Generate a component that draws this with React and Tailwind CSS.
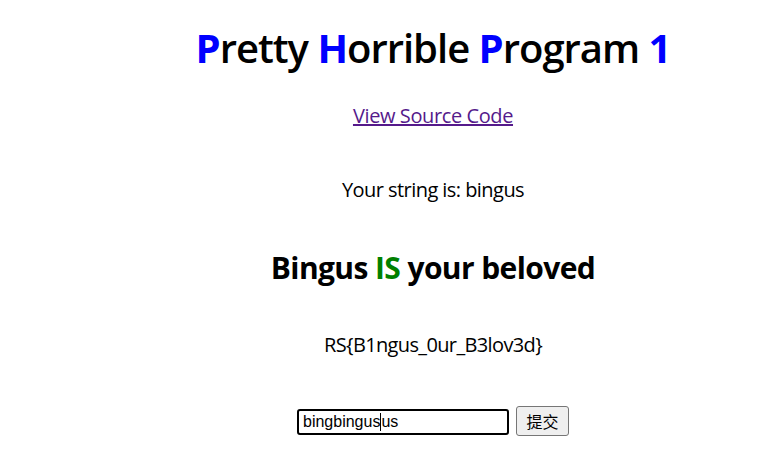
const App = () => {
  return (
    <div className="min-h-[476px] bg-white text-black pl-[94px] text-center" style={{ fontFamily: '"Open Sans", "Noto Sans", sans-serif' }}>
      <h1 className="text-[40px] leading-[48px] pt-[24px] font-semibold tracking-[-1px]">
        <span className="text-[#0000ff] font-bold">P</span>retty{' '}
        <span className="text-[#0000ff] font-bold">H</span>orrible{' '}
        <span className="text-[#0000ff] font-bold">P</span>rogram{' '}
        <span className="text-[#0000ff] font-bold">1</span>
      </h1>

      <div className="mt-[30px] text-[20px] leading-[28px] tracking-[-0.4px]">
        <a href="#" className="text-[#551a8b] underline">View Source Code</a>
      </div>

      <p className="mt-[46px] text-[20px] leading-[28px] tracking-[-0.55px]">Your string is: bingus</p>

      <h2 className="mt-[46px] text-[30px] leading-[36px] font-bold tracking-[-0.6px]">
        Bingus <span className="text-[#008000]">IS</span> your beloved
      </h2>

      <p className="mt-[45px] text-[20px] leading-[28px] tracking-[-0.64px]">RS{'{'}B1ngus_0ur_B3lov3d{'}'}</p>

      <div className="mt-[47px] flex items-center justify-center gap-[7px]">
        <div
          className="w-[212px] h-[26px] mt-[1px] border-2 border-black rounded-[3px] flex items-center px-[4px] text-[16px] text-left"
          style={{ fontFamily: '"Liberation Sans", Arial, sans-serif' }}
        >
          <span>bingbingus</span>
          <span className="inline-block w-px h-[18px] bg-black"></span>
          <span>us</span>
        </div>
        <button
          className="h-[30px] w-[53px] bg-[#efefef] border border-[#767676] rounded-[3px] text-[16px] leading-none"
          style={{ fontFamily: '"Noto Sans CJK SC", sans-serif' }}
        >
          提交
        </button>
      </div>
    </div>
  );
};

export default App;
